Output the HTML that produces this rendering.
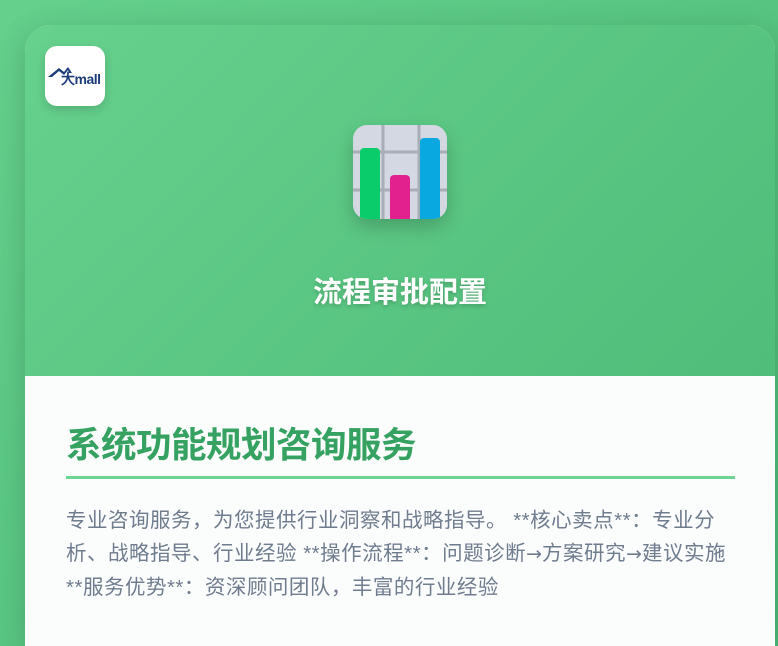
<!DOCTYPE html>
<html><head><meta charset="utf-8"><style>
*{margin:0;padding:0;box-sizing:border-box}
html,body{width:778px;height:646px;overflow:hidden}
body{background:linear-gradient(135deg,#64d08c,#4cbb78);font-family:"Liberation Sans","Noto Sans CJK SC",sans-serif;position:relative}
.card{position:absolute;left:25px;top:25px;width:750px;height:621px;border-radius:26px 26px 0 0;overflow:hidden;box-shadow:0 8px 30px rgba(0,0,0,.18);background:#fbfcfc}
.head{height:351px;background:linear-gradient(135deg,#66d18d,#50bd7a);position:relative}
.logo{position:absolute;left:20px;top:21px;width:60px;height:60px;background:#fff;border-radius:12px;box-shadow:0 4px 10px rgba(0,0,0,.15)}
.icon{position:absolute;left:328px;top:100px;width:94px;height:94px;border-radius:14px;overflow:hidden;box-shadow:0 8px 18px rgba(0,0,0,.2);background:#d4d8e2}
.t1{position:absolute;left:0;right:0;top:244px;text-align:center;color:#fff;font-size:29px;font-weight:bold;text-shadow:0 2px 4px rgba(0,0,0,.2)}
h2{position:absolute;left:41px;top:392px;font-size:35.5px;color:#35a262;font-weight:bold;letter-spacing:-0.5px}
.line{position:absolute;left:41px;top:451px;width:669px;height:3px;background:#6dd591}
p{position:absolute;left:41px;top:479px;width:682px;font-size:20.5px;line-height:33px;color:#6f7c8e;letter-spacing:0.5px}
.a{font-family:"DejaVu Sans",sans-serif;font-size:19px;letter-spacing:0}
</style></head><body>
<div class="card">
<div class="head">
<div class="logo"><svg width="60" height="60" viewBox="0 0 60 60"><path d="M3 31 L14 22 L19 26 L23 21 L27 27 L24 27 L23 24 L19 29 L14 25 L7 31Z" fill="#1d3d7a"/><text x="16" y="38" font-family="Liberation Sans" font-weight="bold" font-size="14" fill="#1d3d7a" textLength="40">大mall</text></svg></div>
<div class="icon"><svg width="94" height="94" viewBox="0 0 94 94"><g stroke="#a9adb5" stroke-width="3"><line x1="30" y1="0" x2="30" y2="94"/><line x1="66" y1="0" x2="66" y2="94"/><line x1="0" y1="27" x2="94" y2="27"/><line x1="0" y1="65" x2="94" y2="65"/></g><rect x="7" y="23" width="20" height="75" rx="4" fill="#0bcc6a"/><rect x="37" y="50" width="20" height="50" rx="4" fill="#e2208e"/><rect x="67" y="13" width="20" height="85" rx="4" fill="#0aa8e0"/></svg></div>
<div class="t1">流程审批配置</div>
</div>
<h2>系统功能规划咨询服务</h2>
<div class="line"></div>
<p>专业咨询服务，为您提供行业洞察和战略指导。 **核心卖点**：专业分析、战略指导、行业经验 **操作流程**：问题诊断<span class="a">→</span>方案研究<span class="a">→</span>建议实施 **服务优势**：资深顾问团队，丰富的行业经验</p>
</div>
</body></html>
